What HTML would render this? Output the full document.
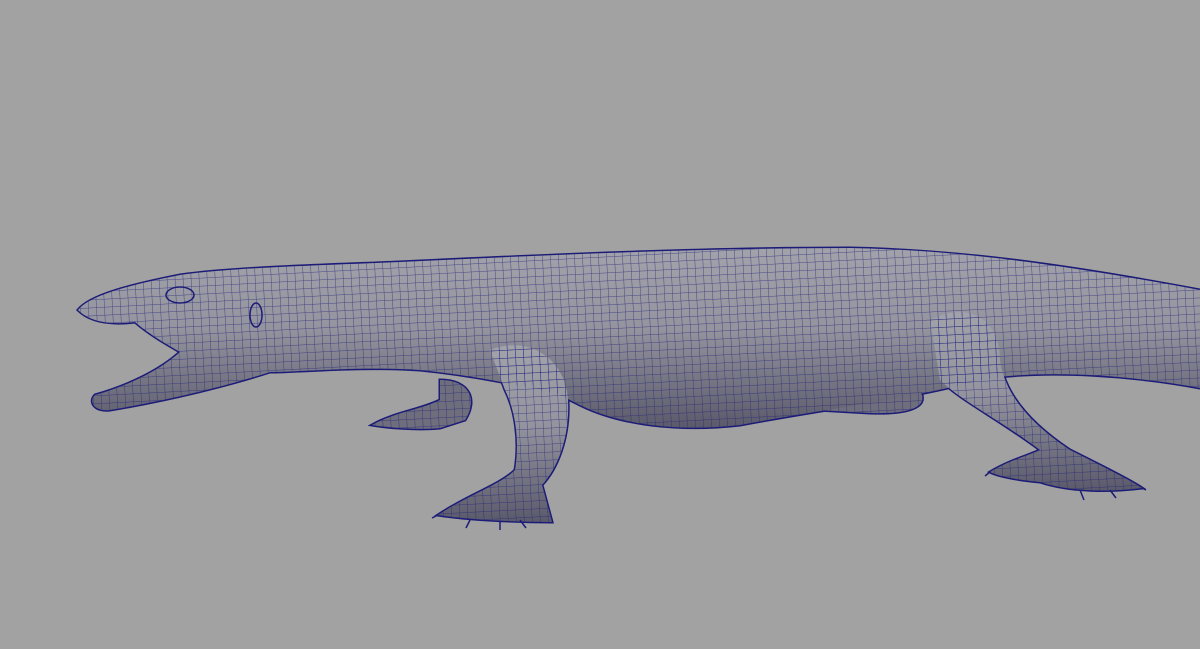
<!DOCTYPE html>
<html><head><style>html,body{margin:0;padding:0;background:#a2a2a2;width:1200px;height:649px;overflow:hidden}</style></head>
<body>
<svg width="1200" height="649" viewBox="0 0 1200 649" xmlns="http://www.w3.org/2000/svg">
<defs>
<pattern id="g" width="8" height="8" patternUnits="userSpaceOnUse" patternTransform="rotate(-3)">
<path d="M0,0H8M0,0V8" stroke="#23237e" stroke-width="1" fill="none" opacity="0.7"/>
</pattern>
<linearGradient id="sh" x1="0" y1="0" x2="0" y2="1">
<stop offset="0" stop-color="#a2a2aa"/>
<stop offset="0.45" stop-color="#94949e"/>
<stop offset="1" stop-color="#5a5a6a"/>
</linearGradient>
<g id="back">
<path d="M440,380 C470,380 478,400 465,420 L440,428 C420,430 390,428 372,425 C395,412 420,410 440,400 Z"/>
<path d="M830,395 C860,385 910,380 922,395 C926,410 900,414 870,413 L818,410 Z"/>
</g>
<g id="front">
<path d="M78,310 C90,295 130,285 180,275 C230,268 300,266 400,262 C550,255 700,248 850,248 C950,250 1050,262 1200,290 L1200,388 C1130,375 1050,370 990,378 L960,385 C900,400 820,410 740,425 C680,432 620,425 580,405 L560,395 C520,385 470,375 420,370 C360,366 300,372 270,372 C230,385 170,400 110,410 C95,412 88,402 95,395 C130,385 160,370 180,352 C168,345 150,335 135,322 C110,325 90,322 78,310 Z"/>
<path d="M490,350 C530,334 566,360 568,400 C570,440 556,470 542,485 L552,522 C520,522 470,520 438,515 C468,495 500,485 515,470 C520,440 515,410 505,390 Z"/>
<path d="M930,320 C970,300 1000,320 1000,360 C1005,400 1040,430 1070,450 C1100,465 1130,480 1142,488 C1110,492 1070,492 1040,482 C1020,480 1000,477 990,472 C1010,460 1030,455 1040,450 C1000,420 960,400 940,380 Z"/>
</g>
</defs>
<g fill="#1c1c78" stroke="#1c1c78" stroke-width="3"><use href="#back"/><use href="#front"/></g>
<g fill="#6e6e7c"><use href="#back"/></g>
<g fill="url(#g)"><use href="#back"/></g>
<g fill="url(#sh)"><use href="#front"/></g>
<g fill="url(#g)"><use href="#front"/></g>
<g fill="none" stroke="#1c1c78" stroke-width="1.5">
<ellipse cx="180" cy="295" rx="14" ry="8"/>
<ellipse cx="256" cy="315" rx="6" ry="12"/>
<path d="M438,515 l-6,3 M470,520 l-4,8 M500,522 l0,8 M520,520 l6,8 M990,472 l-5,4 M1080,490 l4,10 M1110,490 l6,8 M1142,488 l4,2"/>
</g>
</svg>
</body></html>
